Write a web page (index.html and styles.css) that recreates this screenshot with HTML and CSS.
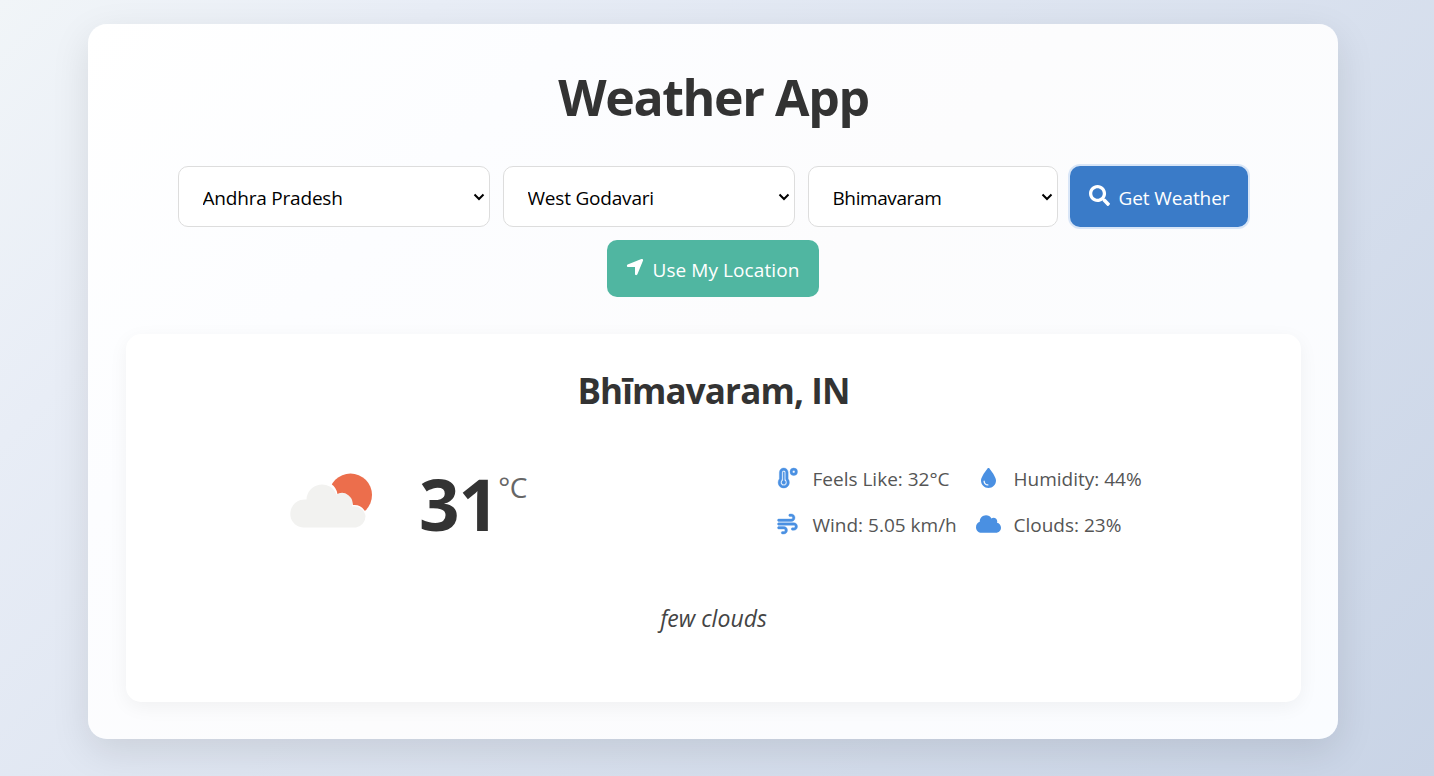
FILE: index.html
```html
<!DOCTYPE html>
<html lang="en">
<head>
<meta charset="utf-8">
<title>Weather App</title>
<link rel="stylesheet" href="styles.css">
</head>
<body>
<main class="container">
  <h1 class="title">Weather App</h1>
  <div class="controls">
    <div class="field state"><select class="select"><option>Andhra Pradesh</option></select><svg class="chevron" viewBox="0 0 12 8"><path d="M1.5 1.5 6 6l4.500-4.500"/></svg></div>
    <div class="field district"><select class="select"><option>West Godavari</option></select><svg class="chevron" viewBox="0 0 12 8"><path d="M1.500 1.500 6 6l4.500-4.500"/></svg></div>
    <div class="field city"><select class="select"><option>Bhimavaram</option></select><svg class="chevron" viewBox="0 0 12 8"><path d="M1.500 1.500 6 6l4.500-4.500"/></svg></div>
    <button class="button search"><svg class="search-icon" viewBox="0 0 512 512"><path d="M505 442.700L405.300 343c-4.500-4.500-10.600-7-17-7H372c27.600-35.300 44-79.700 44-128C416 93.100 322.900 0 208 0S0 93.100 0 208s93.100 208 208 208c48.300 0 92.700-16.400 128-44v16.300c0 6.400 2.500 12.500 7 17l99.700 99.700c9.400 9.400 24.600 9.400 33.900 0l28.300-28.300c9.400-9.400 9.400-24.600.1-34zM208 336c-70.700 0-128-57.200-128-128 0-70.700 57.200-128 128-128 70.700 0 128 57.200 128 128 0 70.700-57.200 128-128 128z"/></svg><span class="search-label">Get Weather</span></button>
  </div>
  <div class="locate-row">
    <button class="button locate"><svg class="arrow-icon" viewBox="0 0 448 512"><path d="M429.600 92.100c4.900-11.900 2.100-25.600-7-34.700s-22.800-11.900-34.700-7l-352 144c-14.200 5.800-22.200 20.800-19.300 35.800s16.100 25.800 31.400 25.800H224V432c0 15.300 10.800 28.400 25.800 31.400s30-5.100 35.800-19.300l144-352z"/></svg><span class="locate-label">Use My Location</span></button>
  </div>
  <section class="card">
    <h2 class="place">Bhīmavaram, IN</h2>
    <div class="weather">
      <div class="current">
        <svg class="weather-icon" viewBox="0 0 84 56"><circle class="sun" cx="60.500" cy="22" r="21.500"/><path class="cloud-gap" d="M14 54.500A13.600 13.600 0 0 1 16.500 26.500A15.500 15.500 0 0 1 47.500 21Q60 18 63 32Q72 31 76.500 41Q77 54.500 67 54.500z"/><path class="cloud" d="M13 54.500A13.500 13.500 0 0 1 .3 41A14.500 14.500 0 0 1 16.500 26.500A15.500 15.500 0 0 1 46.500 21.500A10.500 10.500 0 0 1 62 33.500A11.500 11.500 0 0 1 75.500 43A11.500 11.500 0 0 1 66 54.500z"/></svg>
        <div class="temperature"><span class="degrees">31</span><span class="unit">°C</span></div>
      </div>
      <div class="details">
        <div class="detail"><svg class="icon bold" viewBox="0 0 512 512"><path fill-rule="evenodd" d="M160 64c-26.500 0-48 21.500-48 48V276.500c0 17.300-7.100 31.900-15.300 42.500C86.200 332.600 80 349.500 80 368c0 44.200 35.800 80 80 80s80-35.800 80-80c0-18.500-6.200-35.400-16.700-48.900c-8.200-10.600-15.300-25.200-15.300-42.500V112c0-26.500-21.500-48-48-48zM48 112C48 50.200 98.100 0 160 0s112 50.100 112 112V276.500c0 .1.1.3.2.6c.2.6.8 1.600 1.700 2.800c18.900 24.400 30.100 55 30.100 88.100c0 79.500-64.500 144-144 144S16 447.500 16 368c0-33.200 11.200-63.800 30.100-88.100c.9-1.200 1.500-2.200 1.700-2.800c.1-.3.2-.5.2-.6V112zM208 368c0 26.500-21.500 48-48 48s-48-21.500-48-48c0-20.900 13.400-38.700 32-45.300V112c0-8.800 7.200-16 16-16s16 7.200 16 16v210.700c18.600 6.600 32 24.400 32 45.300zM416 0a96 96 0 1 1 0 192a96 96 0 1 1 0-192zM416 64a32 32 0 1 0 0 64a32 32 0 1 0 0-64z"/></svg><span class="feels">Feels Like: 32°C</span></div>
        <div class="detail"><svg class="icon" viewBox="-64 0 512 512"><path d="M192 512C86 512 0 426 0 320C0 228.800 130.200 57.700 166.600 11.700C172.600 4.200 181.500 0 191.100 0h1.800c9.600 0 18.500 4.200 24.500 11.700C253.800 57.700 384 228.800 384 320c0 106-86 192-192 192zM96 336c0-8.800-7.200-16-16-16s-16 7.200-16 16c0 61.900 50.100 112 112 112c8.800 0 16-7.200 16-16s-7.200-16-16-16c-44.200 0-80-35.800-80-80z"/></svg><span class="humidity">Humidity: 44%</span></div>
        <div class="detail"><svg class="icon bold" viewBox="0 0 512 512"><path d="M288 32c0 17.700 14.300 32 32 32h32c17.700 0 32 14.300 32 32s-14.300 32-32 32H32c-17.700 0-32 14.300-32 32s14.300 32 32 32H352c53 0 96-43 96-96s-43-96-96-96H320c-17.700 0-32 14.300-32 32zm64 352c0 17.700 14.300 32 32 32h32c53 0 96-43 96-96s-43-96-96-96H32c-17.700 0-32 14.300-32 32s14.300 32 32 32H416c17.700 0 32 14.300 32 32s-14.300 32-32 32H384c-17.700 0-32 14.300-32 32zM128 512h32c53 0 96-43 96-96s-43-96-96-96H32c-17.700 0-32 14.300-32 32s14.300 32 32 32H160c17.700 0 32 14.300 32 32s-14.300 32-32 32H128c-17.700 0-32 14.300-32 32s14.300 32 32 32z"/></svg><span class="wind">Wind: 5.05 km/h</span></div>
        <div class="detail"><svg class="icon" viewBox="0 0 640 512"><path d="M0 336c0 79.500 64.500 144 144 144H512c70.700 0 128-57.300 128-128c0-61.900-44-113.600-102.400-125.400c4.100-10.700 6.400-22.400 6.400-34.600c0-53-43-96-96-96c-19.700 0-38.100 6-53.300 16.200C367 64.200 315.300 32 256 32C167.600 32 96 103.600 96 192c0 2.700.1 5.400.2 8.100C40.200 219.800 0 273.200 0 336z"/></svg><span class="clouds">Clouds: 23%</span></div>
      </div>
    </div>
    <p class="description">few clouds</p>
  </section>
</main>
</body>
</html>
```
FILE: styles.css
```css
* { box-sizing: border-box; }
body {
  margin: 0;
  height: 776px;
  overflow: hidden;
  padding: 24px 96px 0 88px;
  background: linear-gradient(135deg, #f1f5f8 0%, #e8edf6 20%, #c9d4e6 100%);
  font-family: "Open Sans", "Noto Sans", sans-serif;
  color: #333;
}
.container {
  height: 715px;
  padding: 37px 37px 37px 38px;
  border-radius: 19px;
  background: linear-gradient(135deg, #fff, #fcfdff 25%, #fcfcfd 50%, #fafcff);
  box-shadow: 0 12px 38px rgba(0, 0, 0, .1);
}
.title {
  margin: 0;
  height: 105px;
  text-align: center;
  font-size: 50px;
  line-height: 73px;
  letter-spacing: -1.4px;
}
.controls { display: flex; justify-content: center; gap: 13px; height: 61px; margin-right: 2px; }
.field { position: relative; }
.state { width: 312px; }
.district { width: 292px; }
.city { width: 250px; }
.select {
  appearance: none;
  width: 100%;
  height: 61px;
  padding: 2px 24px 0;
  border: 1px solid #ddd;
  border-radius: 10px;
  background: #fff;
  color: #000;
  font: 19px "Open Sans", sans-serif;
  letter-spacing: -.2px;
}
.city .select { letter-spacing: -.4px; }
.chevron {
  position: absolute;
  right: 5px;
  top: 27px;
  width: 12px;
  height: 8px;
  fill: none;
  stroke: #000;
  stroke-width: 2;
}
.button {
  display: flex;
  align-items: center;
  border: 0;
  border-radius: 10px;
  color: #fff;
  font: 19px "Open Sans", sans-serif;
  white-space: nowrap;
  padding: 2px 0 0 19px;
}
.button svg { fill: #fff; }
.search { width: 178px; height: 61px; margin-left: -1px; background: #3a7bc8; box-shadow: 0 0 0 2px #d9e6f7; }
.search-icon { width: 21px; height: 21px; margin: -4px 9px 0 0; }
.search-label { letter-spacing: -.08px; }
.locate-row { display: flex; justify-content: center; margin-right: 2px; padding-top: 13px; height: 107px; }
.locate { width: 212px; height: 57px; background: #50b6a1; }
.arrow-icon { width: 18px; height: 20px; margin: -5px 9px 0 0; }
.locate-label { letter-spacing: .08px; }
.card {
  height: 368px;
  padding-top: 32px;
  border-radius: 15px;
  background: #fff;
  box-shadow: 0 5px 19px rgba(0, 0, 0, .05);
}
.place { margin: 0; height: 87px; text-align: center; font-size: 35px; line-height: 50px; letter-spacing: -.87px; }
.weather { display: grid; grid-template-columns: 649px 1fr; height: 140px; }
.current { display: flex; padding-left: 164px; }
.weather-icon { width: 84px; height: 56px; margin-top: 20px; }
.sun { fill: #ec6e4c; }
.cloud-gap { fill: #fff; }
.cloud { fill: #f2f2f0; }
.temperature { display: flex; margin: 2px 0 0 45px; line-height: 98px; }
.degrees { font-size: 71px; font-weight: 700; letter-spacing: -1px; }
.unit { margin: 12px 0 0 0; font-size: 28px; line-height: 40px; color: #666; letter-spacing: -.5px; }
.details { display: grid; grid-template-columns: 201px 1fr; grid-template-rows: 46px 46px; color: #555; font-size: 19px; }
.detail { display: flex; align-items: center; gap: 12px; height: 52px; white-space: nowrap; }
.detail span { margin-left: .5px; }
.icon { width: 25px; height: 20px; fill: #4a90e2; margin-top: -3px; overflow: visible; }
.bold { stroke: #4a90e2; stroke-width: 10; }
.description { margin: 0; text-align: center; font-size: 23px; font-style: italic; line-height: 50px; color: #444; }
```
